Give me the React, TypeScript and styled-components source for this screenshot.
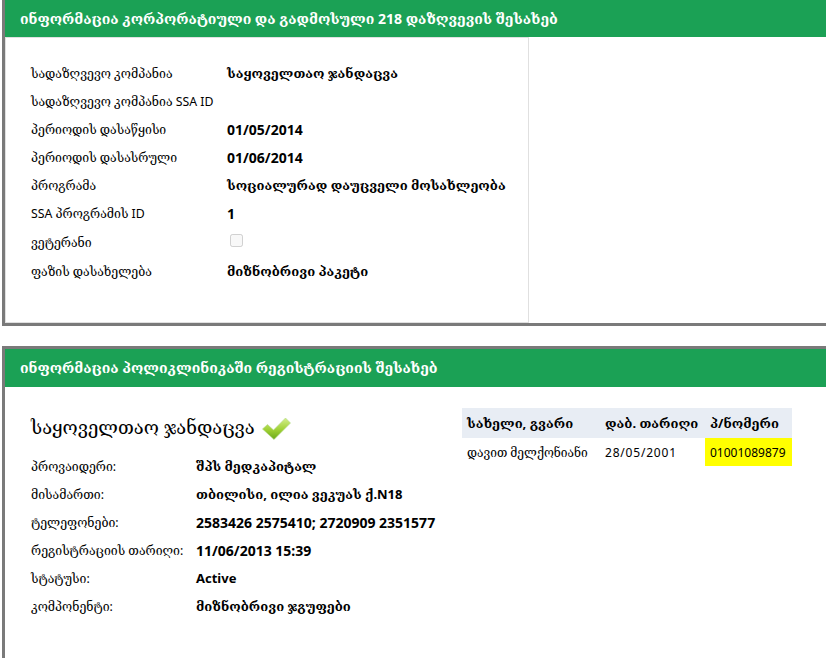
import React from "react";
import styled, { createGlobalStyle } from "styled-components";

const GlobalStyle = createGlobalStyle`
  html, body {
    margin: 0;
    padding: 0;
    background: #fff;
    overflow: hidden;
  }
  body {
    font-family: "Noto Sans", "DejaVu Serif", "DejaVu Sans", sans-serif;
    font-size: 13px;
    color: #000;
  }
`;

const Page = styled.div`
  width: 826px;
  height: 658px;
  overflow: hidden;
`;

const Panel = styled.section<{ $height: number; $top?: number; $open?: boolean }>`
  height: ${(p) => p.$height}px;
  margin-top: ${(p) => p.$top ?? 0}px;
  margin-left: 2px;
  box-sizing: border-box;
  border: 3px solid #7a7a7a;
  border-top-width: ${(p) => (p.$open ? 0 : 3)}px;
  border-right: 0;
  display: flex;
  flex-direction: column;
`;

const PanelTitle = styled.h2<{ $height: number }>`
  margin: 0;
  height: ${(p) => p.$height}px;
  line-height: ${(p) => p.$height}px;
  padding-left: 15px;
  background: #1ba155;
  color: #fff;
  font-size: 14px;
  font-weight: bold;
`;

const InsuranceBody = styled.div`
  flex: 1;
  display: flex;
`;

const InsuranceColumn = styled.div`
  width: 524px;
  box-sizing: border-box;
  border: 1px solid #e0e0e0;
  padding: 21px 0 0 25px;
`;

const InfoRow = styled.div<{ $labelWidth: number; $height: number }>`
  display: grid;
  grid-template-columns: ${(p) => p.$labelWidth}px 1fr;
  height: ${(p) => p.$height}px;
  align-items: center;
  white-space: nowrap;
`;

const Label = styled.span`
  font-size: 12.3px;
`;

const Value = styled.span<{ $numeric?: boolean }>`
  font-size: ${(p) => (p.$numeric ? 14 : 13)}px;
  font-weight: bold;
`;

const Check = styled.input`
  width: 13px;
  height: 13px;
  margin: 0 0 4px 3px;
`;

const ClinicBody = styled.div`
  flex: 1;
  display: flex;
  justify-content: space-between;
  padding: 21px 34px 0 26px;
`;

const ClinicHeading = styled.h3`
  margin: 0 0 8px;
  font-size: 18.4px;
  font-weight: normal;
  display: flex;
  align-items: center;
  gap: 7px;
  height: 36px;
`;

const TickIcon = styled.svg`
  margin-top: 5px;
`;

const PersonTable = styled.table`
  border-collapse: collapse;
  table-layout: fixed;
  width: 330px;
  align-self: flex-start;
`;

const HeadCell = styled.th<{ $width: number }>`
  width: ${(p) => p.$width}px;
  box-sizing: border-box;
  background: #e8edf4;
  height: 30px;
  padding: 0 5px;
  font-size: 13px;
  text-align: left;
  white-space: nowrap;
`;

const Cell = styled.td<{ $mark?: boolean; $spaced?: boolean }>`
  height: 28px;
  padding: 0 5px;
  font-size: 12px;
  white-space: nowrap;
  letter-spacing: ${(p) => (p.$spaced ? "0.8px" : "normal")};
  background: ${(p) => (p.$mark ? "#ffff00" : "transparent")};
`;

const insurance: [string, string][] = [
  ["სადაზღვევო კომპანია", "საყოველთაო ჯანდაცვა"],
  ["სადაზღვევო კომპანია SSA ID", ""],
  ["პერიოდის დასაწყისი", "01/05/2014"],
  ["პერიოდის დასასრული", "01/06/2014"],
  ["პროგრამა", "სოციალურად დაუცველი მოსახლეობა"],
  ["SSA პროგრამის ID", "1"],
];

const clinic: [string, string][] = [
  ["პროვაიდერი:", "შპს მედკაპიტალ"],
  ["მისამართი:", "თბილისი, ილია ვეკუას ქ.N18"],
  ["ტელეფონები:", "2583426 2575410; 2720909 2351577"],
  ["რეგისტრაციის თარიღი:", "11/06/2013 15:39"],
  ["სტატუსი:", "Active"],
  ["კომპონენტი:", "მიზნობრივი ჯგუფები"],
];

const isNumeric = (value: string) => /^[\d\s/:;]+$/.test(value);

const CheckMark = () => (
  <TickIcon width="29" height="23" viewBox="0 0 29 23">
    <defs>
      <linearGradient id="tick" x1="0" y1="0" x2="0" y2="1">
        <stop offset="0" stopColor="#d4ee8c" />
        <stop offset="0.55" stopColor="#9fd034" />
        <stop offset="1" stopColor="#6aa81a" />
      </linearGradient>
    </defs>
    <path
      d="M0.5 12 L5.5 7.5 L11.5 13 L23.5 1 L28.5 6 L12 22.5 Z"
      fill="url(#tick)"
      stroke="#b4d98a"
      strokeWidth="0.6"
    />
  </TickIcon>
);

const App: React.FC = () => {
  return (
    <Page>
      <GlobalStyle />
      <Panel $height={326} $open>
        <PanelTitle $height={37}>
          ინფორმაცია კორპორატიული და გადმოსული 218 დაზღვევის შესახებ
        </PanelTitle>
        <InsuranceBody>
          <InsuranceColumn>
            {insurance.map(([label, value]) => (
              <InfoRow key={label} $labelWidth={196} $height={28}>
                <Label>{label}</Label>
                <Value $numeric={isNumeric(value)}>{value}</Value>
              </InfoRow>
            ))}
            <InfoRow $labelWidth={196} $height={30}>
              <Label>ვეტერანი</Label>
              <Check type="checkbox" disabled />
            </InfoRow>
            <InfoRow $labelWidth={196} $height={28}>
              <Label>ფაზის დასახელება</Label>
              <Value>მიზნობრივი პაკეტი</Value>
            </InfoRow>
          </InsuranceColumn>
        </InsuranceBody>
      </Panel>
      <Panel $height={320} $top={20}>
        <PanelTitle $height={38}>ინფორმაცია პოლიკლინიკაში რეგისტრაციის შესახებ</PanelTitle>
        <ClinicBody>
          <div>
            <ClinicHeading>
              საყოველთაო ჯანდაცვა
              <CheckMark />
            </ClinicHeading>
            {clinic.map(([label, value]) => (
              <InfoRow key={label} $labelWidth={165} $height={28}>
                <Label>{label}</Label>
                <Value $numeric={isNumeric(value)}>{value}</Value>
              </InfoRow>
            ))}
          </div>
          <PersonTable>
            <thead>
              <tr>
                <HeadCell $width={138}>სახელი, გვარი</HeadCell>
                <HeadCell $width={105}>დაბ. თარიღი</HeadCell>
                <HeadCell $width={87}>პ/ნომერი</HeadCell>
              </tr>
            </thead>
            <tbody>
              <tr>
                <Cell>დავით მელქონიანი</Cell>
                <Cell $spaced>28/05/2001</Cell>
                <Cell $mark>01001089879</Cell>
              </tr>
            </tbody>
          </PersonTable>
        </ClinicBody>
      </Panel>
    </Page>
  );
};

export default App;
